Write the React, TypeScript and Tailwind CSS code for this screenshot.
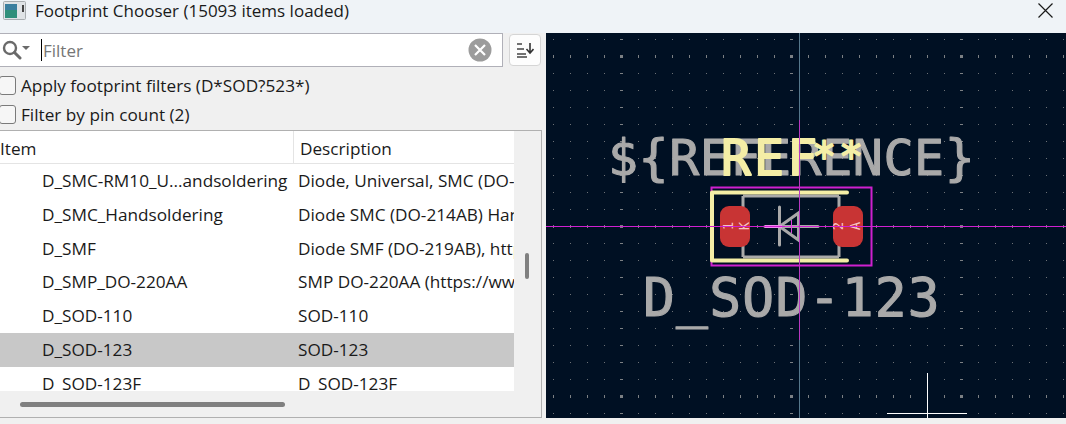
import React from "react";

const rows: [string, string][] = [
  ["D_SMC-RM10_U...andsoldering", "Diode, Universal, SMC (DO-214AB), RM10"],
  ["D_SMC_Handsoldering", "Diode SMC (DO-214AB) Handsoldering"],
  ["D_SMF", "Diode SMF (DO-219AB), https://www.example"],
  ["D_SMP_DO-220AA", "SMP DO-220AA (https://www.vishay.com)"],
  ["D_SOD-110", "SOD-110"],
  ["D_SOD-123", "SOD-123"],
  ["D_SOD-123F", "D_SOD-123F"],
];

function Grid() {
  const items: React.ReactNode[] = [];
  for (let y = 39; y < 418; y += 17) {
    for (let x = 553; x < 1066; x += 17) {
      const majorY = (y - 56) % 170 === 0;
      const majorX = (x - 621) % 170 === 0;
      const w = majorX ? 3 : 1;
      const h = majorY ? 3 : 1;
      items.push(
        <rect key={`${x}-${y}`} x={x - (w - 1) / 2} y={y - (h - 1) / 2} width={w} height={h} fill={majorX || majorY ? "#7c8084" : "#6c7176"} />
      );
    }
  }
  return <g shapeRendering="crispEdges">{items}</g>;
}

function Canvas() {
  const mono = { fontFamily: '"DejaVu Sans Mono", monospace' };
  return (
    <svg className="block h-[385px] w-[520px]" viewBox="546 33 520 385">
      <rect x="546" y="33" width="520" height="385" fill="#001023" />
      <Grid />
      <text x="608" y="175" fontSize="50" letterSpacing="0.5" fill="#a9a9a9" stroke="#a9a9a9" strokeWidth="1.1" strokeLinejoin="round" style={mono}>
        {"${REFERENCE}"}
      </text>
      <text x="643" y="316" fontSize="53" letterSpacing="1.2" fill="#a9a9a9" stroke="#a9a9a9" strokeWidth="1.1" strokeLinejoin="round" style={mono}>
        D_SOD-123
      </text>
      <text x="721" y="175" fontSize="50" letterSpacing="3" fill="#f4eea6" stroke="#f4eea6" strokeWidth="1.8" strokeLinejoin="round" style={mono}>
        REF
      </text>
      <text x="812" y="171" fontSize="40" letterSpacing="3" fill="#f4eea6" stroke="#f4eea6" strokeWidth="1.8" strokeLinejoin="round" style={mono}>
        **
      </text>
      <rect x="711.5" y="187.5" width="160" height="78" fill="none" stroke="#cf20cf" strokeWidth="2" />
      <path d="M743 196H839M743 257H839M743 196V257M839 196V257" stroke="#a9a9a9" strokeWidth="3" fill="none" />
      <path d="M847 192.5H712V260.5H847" stroke="#f4eea6" strokeWidth="4" strokeLinecap="round" strokeLinejoin="round" fill="none" />
      <rect x="720" y="206" width="30" height="41" rx="9" fill="#c83434" />
      <rect x="833" y="206" width="30" height="41" rx="9" fill="#c83434" />
      <g fill="#f8c4c4" style={mono}>
        <text transform="translate(733 226) rotate(-90)" textAnchor="middle" fontSize="14">1</text>
        <text transform="translate(749 226) rotate(-90)" textAnchor="middle" fontSize="14">K</text>
        <text transform="translate(843 226) rotate(-90)" textAnchor="middle" fontSize="14">2</text>
        <text transform="translate(860 226) rotate(-90)" textAnchor="middle" fontSize="14">A</text>
      </g>
      <path d="M779.5 207V245M798.5 213V240L779.5 226.5ZM765 226.5H818" stroke="#a9a9a9" strokeWidth="3" fill="none" strokeLinecap="round" />
      <path d="M765 226.5H782" stroke="#f08cf0" strokeWidth="3" />
      <path d="M546 226.5H1066" stroke="#d020d0" strokeWidth="1" />
      <path d="M799.5 33V418" stroke="#56788c" strokeWidth="1" />
      <path d="M799.5 120V340" stroke="#b838c0" strokeWidth="1" />
      <path d="M791.5 220V233M785 226.5H798" stroke="#e040e0" strokeWidth="1" />
      <path d="M927.5 373V418M887 413.5H967" stroke="#ffffff" strokeWidth="1" />
    </svg>
  );
}

export default function App() {
  return (
    <div className="flex h-[424px] w-[1066px] flex-col overflow-hidden bg-[#f0f0f0] text-[#1a1a1a]" style={{ fontFamily: '"Open Sans", sans-serif' }}>
      <div className="h-[33px] shrink-0 bg-[#eff3f7]">
        <div className="flex h-[21px] items-center">
          <svg className="ml-[3px] mr-[9px] h-[19px] w-[23px] shrink-0" viewBox="0 0 23 19">
            <rect x="0.5" y="0.5" width="22" height="18" rx="1" fill="#dfe3e6" stroke="#a8adb0" />
            <rect x="2" y="3" width="12" height="14" fill="#2f8f7a" />
            <rect x="2" y="3" width="12" height="6" fill="#3a7f9f" />
            <rect x="19" y="4" width="2" height="7" fill="#444" />
          </svg>
          <span className="text-[17px] leading-none whitespace-nowrap">Footprint Chooser (15093 items loaded)</span>
          <svg className="ml-auto mr-[13px] h-[15px] w-[15px]" viewBox="0 0 15 15">
            <path d="M0.5 0.5L14.5 14.5M14.5 0.5L0.5 14.5" stroke="#1a1a1a" strokeWidth="1.2" />
          </svg>
        </div>
      </div>
      <div className="flex min-h-0 flex-1">
        <div className="flex w-[546px] shrink-0 flex-col">
          <div className="flex h-[34px] shrink-0">
            <div className="flex h-[34px] w-[503px] items-center border border-l-0 border-[#b0b0b8] bg-white">
              <svg className="ml-[1px] h-[20px] w-[30px] shrink-0" viewBox="0 0 30 20">
                <circle cx="9" cy="8" r="6" fill="none" stroke="#6a6a6a" strokeWidth="2.4" />
                <path d="M13.5 12.5L19 18" stroke="#6a6a6a" strokeWidth="3" strokeLinecap="round" />
                <path d="M21 6H29L25 10Z" fill="#6a6a6a" />
              </svg>
              <div className="ml-[10px] h-[22px] w-px bg-black" />
              <span className="ml-px text-[17px] leading-none text-[#767676]">Filter</span>
              <svg className="ml-auto mr-[10px] h-[24px] w-[24px]" viewBox="0 0 24 24">
                <circle cx="12" cy="12" r="11.5" fill="#9c9c9c" />
                <path d="M7 7L17 17M17 7L7 17" stroke="#fff" strokeWidth="2.2" />
              </svg>
            </div>
            <div className="ml-[6px] mt-px flex h-[32px] w-[32px] items-center justify-center rounded-[4px] border border-[#d5d5d5] bg-[#fdfdfd]">
              <svg className="h-[16px] w-[17px]" viewBox="0 0 17 16">
                <path d="M0 2H5M0 7H7M0 12H9M0 15H10" stroke="#444" strokeWidth="1.6" />
                <path d="M13 1V10M9.5 7L13 11L16.5 7" stroke="#333" strokeWidth="1.6" fill="none" />
              </svg>
            </div>
          </div>
          <label className="mt-[8px] flex h-[20px] items-center gap-[5px] text-[17.2px] leading-none whitespace-nowrap">
            <span className="ml-[-1px] h-[19px] w-[17px] rounded-[3px] border border-[#7a7a7a] bg-[#f6f6f6]" />
            <span className="pt-[1px]">Apply footprint filters (D*SOD?523*)</span>
          </label>
          <label className="mt-[9px] flex h-[20px] items-center gap-[5px] text-[17.2px] leading-none whitespace-nowrap">
            <span className="ml-[-1px] h-[19px] w-[17px] rounded-[3px] border border-[#7a7a7a] bg-[#f6f6f6]" />
            <span className="pt-[1px]">Filter by pin count (2)</span>
          </label>
          <div className="mb-[6px] mt-[6px] flex min-h-0 w-[542px] flex-1 flex-col border border-l-0 border-[#b0b0b0]">
            <div className="flex min-h-0 flex-1">
              <div className="flex w-[514px] shrink-0 flex-col overflow-hidden bg-white text-[17.2px]">
                <div className="flex h-[33px] shrink-0 border-b border-[#e4e4e4]">
                  <span className="flex w-[293px] shrink-0 items-center pt-[3px]">Item</span>
                  <span className="flex items-center whitespace-nowrap border-l border-[#e4e4e4] pl-[6px] pt-[3px]">Description</span>
                </div>
                {rows.map(([a, b]) => (
                  <div key={a} className={`flex h-[33.8px] shrink-0 items-center whitespace-nowrap ${a === "D_SOD-123" ? "bg-[#c8c8c8]" : ""}`}>
                    <span className="w-[298px] shrink-0 pl-[42px]">{a}</span>
                    <span>{b}</span>
                  </div>
                ))}
              </div>
              <div className="flex-1 pl-[11px] pt-[122px]">
                <div className="h-[26px] w-[4px] rounded-full bg-[#808080]" />
              </div>
            </div>
            <div className="flex h-[26px] shrink-0 items-center pl-[20px]">
              <div className="h-[5px] w-[265px] rounded-full bg-[#808080]" />
            </div>
          </div>
        </div>
        <div className="h-[385px] w-[520px]">
          <Canvas />
        </div>
      </div>
    </div>
  );
}
